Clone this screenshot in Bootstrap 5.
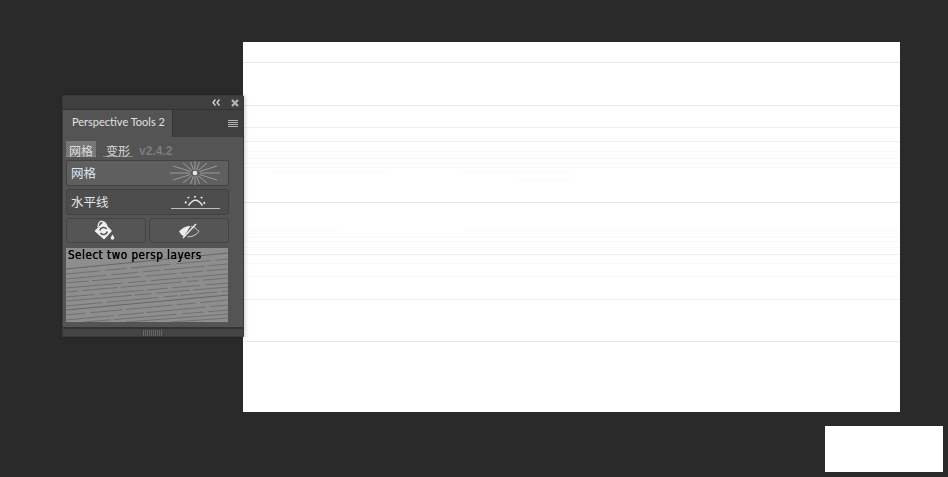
<!DOCTYPE html>
<html lang="zh">
<head>
<meta charset="utf-8">
<title>Perspective Tools 2</title>
<link href="https://cdn.jsdelivr.net/npm/bootstrap@5.3.0/dist/css/bootstrap.min.css" rel="stylesheet">
<style>
html,body{height:100%;}
body{background:#2a2a2a;overflow:hidden;font-family:"Liberation Sans","Noto Sans CJK SC",sans-serif;}
.stage{position:relative;width:948px;height:477px;}
.doc-sheet{position:absolute;left:243px;top:42px;width:657px;height:370px;background:#fff;}
.doc-sheet svg{display:block;}
.thumb-sheet{position:absolute;left:825px;top:426px;width:118px;height:46px;background:#fff;}
.tool-panel{position:absolute;left:62px;top:95px;width:182px;height:242px;background:#545454;border:1px solid #3a3a3a;border-radius:2px 2px 0 0;box-shadow:1px 0 4px rgba(0,0,0,.2);color:#e4e4e4;}
.panel-top{height:13px;background:#3f3f3f;padding-right:4px;gap:11px;}
.panel-tabs{height:28px;background:#3f3f3f;border-top:1px solid #333;}
.active-tab{width:110px;background:#545454;border-right:1px solid #333;font-family:"Lato","Noto Sans",sans-serif;font-size:11px;color:#e2e2e2;padding:0 0 2px 9px;}
.tab-menu{padding-right:5px;}
.panel-main{padding:4px 14px 0 3px;}
.mode-row{height:19px;gap:7px;font-size:12px;font-family:"Noto Sans CJK SC","Liberation Sans",sans-serif;}
.mode-item{width:30px;text-align:center;color:#dcdcdc;border-bottom:1px solid #8a8a8a;height:16px;line-height:19px;}
.mode-on{background-color:#6e6e6e;background-image:conic-gradient(#808080 25%,transparent 0 50%,#808080 0 75%,transparent 0);background-size:2px 2px;}
.mode-ver{font-family:"Liberation Sans",sans-serif;font-weight:700;font-size:12px;line-height:21px;color:#7c7c7c;margin-left:-1px;}
.big-tool{height:26px;border:1px solid #414141;border-radius:3px;padding:0 6px 0 4px;font-size:12.500px;color:#e6e6e6;font-family:"Noto Sans CJK SC",sans-serif;}
.tool-light{background:#5f5f5f;color:#dfe6f5;margin-bottom:3px;}
.tool-dark{background:#4d4d4d;margin-bottom:3px;}
.icon-row{gap:3px;margin-bottom:5px;}
.icon-tool{width:80px;height:25px;background:#555;border:1px solid #434343;border-radius:3px;}
.soft-icon{filter:blur(.35px);}
.burst-icon{margin-right:2px;}
.horizon-icon{margin:2px 1px 0 0;}
.bucket-icon{margin-right:4px;}
.hint-box{position:relative;width:162px;height:74px;background:#8e8e8e;overflow:hidden;}
.hint-box svg{display:block;}
.hint-text{position:absolute;left:2px;top:0;font-family:"DejaVu Sans",sans-serif;font-stretch:condensed;font-size:11.500px;line-height:15px;color:#000;white-space:nowrap;letter-spacing:.55px;text-shadow:0 0 .4px #000;}
.panel-foot{position:absolute;left:0;right:0;bottom:0;height:9px;background:#444;border-top:2px solid #333;}
.grip{width:20px;height:6px;background:repeating-linear-gradient(90deg,#666 0 1px,transparent 1px 2px);}
</style>
</head>
<body>
<div class="stage">
  <div class="doc-sheet">
    <svg width="657" height="370" viewBox="0 0 657 370" fill="none">
      <g stroke="#e8e8e8">
        <path d="M0 20.500H657M0 63.500H657M0 160.500H657M0 299.500H657"/>
      </g>
      <g stroke="#f0f0f0">
        <path d="M0 85.500H657M0 99.500H657M0 257.500H657M0 212.500H657"/>
      </g>
      <g stroke="#f8f8f8">
        <path d="M0 109.500H657M0 116.500H657M0 121.500H657M0 125.500H657M0 191.500H657M0 199.500H657M0 205.500H657M0 221.500H657M0 234.500H657"/>
      </g>
      <g stroke="#fafafa">
        <path d="M30 129.500H145M215 129.500H330M275 137.500H330M0 188.500H95M220 188.500H657M0 195.500H657"/>
      </g>
    </svg>
  </div>
  <div class="thumb-sheet"></div>

  <div class="tool-panel d-flex flex-column">
    <div class="panel-top d-flex justify-content-end align-items-center">
      <svg width="8" height="7" viewBox="0 0 8 7" fill="none" stroke="#d8d8d8" stroke-width="1.300"><path d="M3.500.5 1 3.500l2.500 3M7.500.5 5 3.500l2.500 3"/></svg>
      <svg width="8" height="8" viewBox="0 0 8 8" fill="none" stroke="#b4b4b4" stroke-width="2.200"><path d="M1 1l6 6M7 1 1 7"/></svg>
    </div>
    <div class="panel-tabs d-flex">
      <div class="active-tab d-flex align-items-center">Perspective Tools 2</div>
      <div class="tab-menu flex-grow-1 d-flex justify-content-end align-items-center">
        <svg width="10" height="8" viewBox="0 0 10 8" fill="none" stroke="#b4b4b4"><path d="M0 .5H10M0 2.500H10M0 4.500H10M0 6.500H10"/></svg>
      </div>
    </div>
    <div class="panel-main d-flex flex-column">
      <div class="mode-row d-flex align-items-start">
        <span class="mode-item mode-on">网格</span>
        <span class="mode-item">变形</span>
        <span class="mode-ver">v2.4.2</span>
      </div>
      <div class="big-tool tool-light d-flex justify-content-between align-items-center">
        <span>网格</span>
        <svg class="soft-icon burst-icon" width="50" height="24" viewBox="0 0 50 24" fill="none" stroke="#a0a0a0" stroke-width=".9">
          <path d="M0 12H20M30 12H50M3 5 20.500 10.500M47 5 29.500 10.500M3 19 20.500 13.500M47 19 29.500 13.500M13 2 22 9.500M37 2 28 9.500M13 22 22 14.500M37 22 28 14.500M20.500 1 23.500 9M29.500 1 26.500 9M20.500 23 23.500 15M29.500 23 26.500 15M25 0V8.500M25 15.500V24"/>
          <circle cx="25" cy="12" r="2.300" fill="#e8e8e8" stroke="none"/>
        </svg>
      </div>
      <div class="big-tool tool-dark d-flex justify-content-between align-items-center">
        <span>水平线</span>
        <svg class="soft-icon horizon-icon" width="50" height="16" viewBox="0 0 50 16" fill="none" stroke="#e8e8e8">
          <path d="M0 13.500H49" stroke="#bdbdbd"/>
          <path d="M17.500 10.500Q24.500 0 31.500 10.500" stroke-width="1.500"/>
          <path d="M14 7l1.500 .8M17 2l.8 1.200M24 1v1.600M31 2l-.8 1.200M34 7.500l-1.500 .8" stroke-width="2"/>
        </svg>
      </div>
      <div class="icon-row d-flex">
        <div class="icon-tool d-flex justify-content-center align-items-center">
          <svg class="soft-icon bucket-icon" width="22" height="21" viewBox="0 0 22 21">
            <path d="M10.500 3 18 11l-7 7.500L2.500 11Z" fill="#f1f1f1" stroke="#f1f1f1" stroke-width="1.500" stroke-linejoin="round"/>
            <path d="M5 7Q5.500 1 9 1.500T14 6" fill="none" stroke="#ececec" stroke-width="1.300"/>
            <path d="M6.800 10.500a3.800 3.800 0 0 1 6.800-1.500M14.300 11.500a3.800 3.800 0 0 1-6.800 1.500" fill="none" stroke="#555" stroke-width="1.500"/>
            <path d="M19.500 14.500c1.300 2 1.800 2.800 1.800 3.500a1.800 1.800 0 0 1-3.600 0c0-.7.500-1.500 1.800-3.500Z" fill="#ededed"/>
          </svg>
        </div>
        <div class="icon-tool d-flex justify-content-center align-items-center">
          <svg class="soft-icon" width="22" height="16" viewBox="0 0 22 16">
            <path d="M1 8.500C4 5 8 3 12.500 3L6 13.500C4 12.500 2.500 10.500 1 8.500Z" fill="#eee"/>
            <path d="M13 3.500C16 4 19 6 21 8.500 18 12 14 14 9.500 13.800" fill="none" stroke="#d0d0d0"/>
            <path d="M5 15 18 1" stroke="#eee" stroke-width="1.400"/>
          </svg>
        </div>
      </div>
      <div class="hint-box">
        <svg width="162" height="74" viewBox="0 0 162 74" fill="none" stroke="#686868" stroke-width=".8">
          <path stroke="#5c5c5c" d="M0 21 162 5M0 62 162 47"/>
          <path stroke-dasharray="34 5 22 4 40 6" d="M0 26 162 11"/>
          <path stroke-dasharray="41 4 27 5 18 3" d="M0 31 162 16"/>
          <path stroke-dasharray="23 3 49 5 31 4" d="M0 35 162 21"/>
          <path stroke-dasharray="57 5 19 4 38 3" d="M0 40 162 26"/>
          <path stroke-dasharray="12 4 36 3 61 5" d="M0 44 162 30"/>
          <path stroke-dasharray="29 5 44 3 21 4" d="M0 49 162 35"/>
          <path stroke-dasharray="66 3 17 5 33 4" d="M0 53 162 39"/>
          <path stroke-dasharray="37 4 52 5 14 3" d="M0 58 162 43"/>
          <path stroke-dasharray="19 5 33 3 47 4" d="M0 67 162 52"/>
          <path stroke-dasharray="48 4 26 3 59 5" d="M0 72 162 57"/>
          <path stroke-dasharray="27 3 63 5 22 4" d="M18 74 162 62"/>
          <path d="M60 74 162 66M105 74 162 70"/>
        </svg>
        <div class="hint-text">Select two persp layers</div>
      </div>
    </div>
    <div class="panel-foot d-flex justify-content-center align-items-center"><div class="grip"></div></div>
  </div>
</div>
</body>
</html>
